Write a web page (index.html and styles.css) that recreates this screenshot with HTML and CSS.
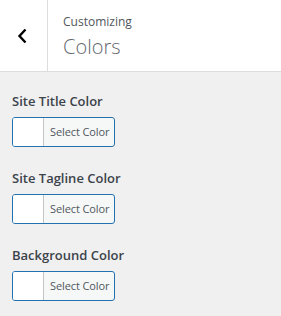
FILE: index.html
```html
<!DOCTYPE html>
<html lang="en">
<head>
    <meta charset="UTF-8">
    <meta name="viewport" content="width=device-width, initial-scale=1.0">
    <title>Customizing Colors</title>
    <link rel="stylesheet" href="styles.css">
</head>
<body>
    <div class="section-title">
        <button class="back" type="button" aria-label="Back">
            <svg width="12" height="16" viewBox="0 0 12 16">
                <path d="M8.5 1.5 L2.5 8 L8.5 14.5" fill="none" stroke="#000" stroke-width="2.4"/>
            </svg>
        </button>
        <h3>
            <span class="action">Customizing</span>
            Colors
        </h3>
    </div>

    <ul class="controls">
        <li class="control">
            <span class="label">Site Title Color</span>
            <button class="color-btn" type="button">
                <span class="swatch"></span>
                <span class="btn-text">Select Color</span>
            </button>
        </li>
        <li class="control">
            <span class="label">Site Tagline Color</span>
            <button class="color-btn" type="button">
                <span class="swatch"></span>
                <span class="btn-text">Select Color</span>
            </button>
        </li>
        <li class="control">
            <span class="label">Background Color</span>
            <button class="color-btn" type="button">
                <span class="swatch"></span>
                <span class="btn-text">Select Color</span>
            </button>
        </li>
    </ul>
</body>
</html>
```

FILE: styles.css
```css
body {
    margin: 0;
    font-family: "Open Sans", "Noto Sans", sans-serif;
    background-color: #f0f0f1;
    color: #3c434a;
}

.section-title {
    display: flex;
    height: 71px;
    background-color: #fff;
    border-bottom: 1px solid #dcdcde;
}

.back {
    width: 48px;
    height: 71px;
    padding: 0 1px 0 0;
    margin: 0;
    border: none;
    border-right: 1px solid #dcdcde;
    background: #fff;
    display: flex;
    align-items: center;
    justify-content: center;
}

.back svg {
    display: block;
}

h3 {
    margin: 0;
    padding: 10px 10px 0 15px;
    font-size: 20px;
    font-weight: 300;
    line-height: 26px;
    color: #646970;
}

.action {
    display: block;
    font-size: 12px;
    font-weight: 400;
    line-height: 24px;
    color: #50575e;
}

.controls {
    list-style: none;
    margin: 0;
    padding: 19px 12px 0 12px;
}

.control {
    margin-bottom: 21px;
}

.label {
    display: block;
    font-size: 13px;
    font-weight: 600;
    line-height: 20px;
    margin-bottom: 6px;
    color: #3c434a;
}

.color-btn {
    display: flex;
    width: 103px;
    height: 30px;
    padding: 0;
    margin: 0;
    border: 1px solid #2271b1;
    border-radius: 3px;
    background-color: #f6f7f7;
    overflow: hidden;
    font-family: inherit;
    cursor: pointer;
}

.swatch {
    flex: none;
    width: 30px;
    height: 100%;
    background-color: #fff;
    border-right: 1px solid #c3c4c7;
}

.btn-text {
    padding: 0 0 0 6px;
    font-size: 11px;
    line-height: 28px;
    letter-spacing: -0.1px;
    color: #50575e;
    white-space: nowrap;
}
```
